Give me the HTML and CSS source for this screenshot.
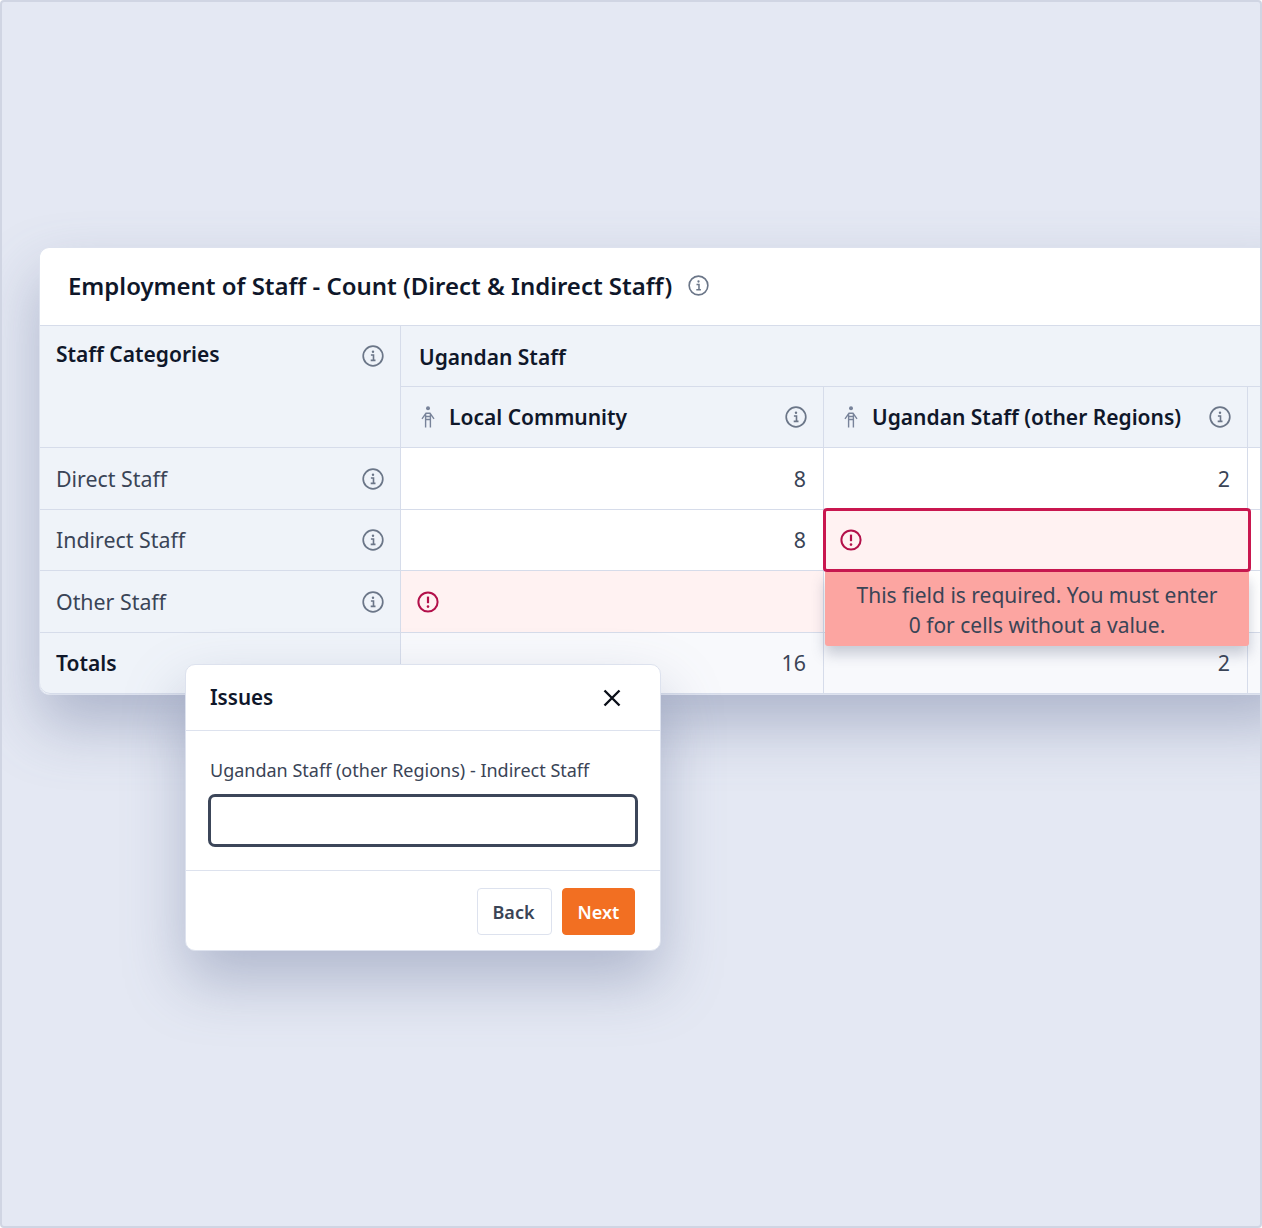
FILE: index.html
```html
<!DOCTYPE html>
<html lang="en">
<head>
    <meta charset="UTF-8">
    <title>Employment of Staff</title>
    <link rel="stylesheet" href="styles.css">
</head>
<body>
    <svg class="defs" width="0" height="0">
        <symbol id="info" viewBox="0 0 22 22">
            <circle cx="11" cy="11" r="9.8" fill="none" stroke="currentColor" stroke-width="1.7"/>
            <circle cx="11" cy="6.8" r="1.2" fill="currentColor"/>
            <path d="M8.9 10h2.6v5.2M8.7 15.4h4.8" fill="none" stroke="currentColor" stroke-width="1.6"/>
        </symbol>
        <symbol id="person" viewBox="0 0 14 22">
            <circle cx="7" cy="2.3" r="2" fill="currentColor"/>
            <path d="M1 12.8 5 7.2h4l4 5.6M4.6 7.2v14.3M9.4 7.2v14.3M4.6 10.5h4.8M4.6 13.5h4.8" fill="none" stroke="currentColor" stroke-width="1.4"/>
        </symbol>
        <symbol id="alert" viewBox="0 0 22 22">
            <circle cx="11" cy="11" r="9.6" fill="none" stroke="currentColor" stroke-width="2"/>
            <path d="M11 5.6v6.6" stroke="currentColor" stroke-width="2.2"/>
            <circle cx="11" cy="15.6" r="1.3" fill="currentColor"/>
        </symbol>
    </svg>

    <div class="frame">
        <div class="card">
            <div class="card-title">
                <h1>Employment of Staff - Count (Direct &amp; Indirect Staff)</h1>
                <svg class="icon-title"><use href="#info"/></svg>
            </div>

            <div class="grid">
                <div class="cell head cat-head">
                    <span>Staff Categories</span>
                    <svg class="icon-info"><use href="#info"/></svg>
                </div>
                <div class="cell head group-head">Ugandan Staff</div>

                <div class="cell head">
                    <svg class="icon-person"><use href="#person"/></svg>
                    <span class="grow">Local Community</span>
                    <svg class="icon-info"><use href="#info"/></svg>
                </div>
                <div class="cell head">
                    <svg class="icon-person"><use href="#person"/></svg>
                    <span class="grow">Ugandan Staff (other Regions)</span>
                    <svg class="icon-info"><use href="#info"/></svg>
                </div>
                <div class="cell head"></div>

                <div class="cell label">
                    <span>Direct Staff</span>
                    <svg class="icon-info"><use href="#info"/></svg>
                </div>
                <div class="cell num">8</div>
                <div class="cell num">2</div>
                <div class="cell"></div>

                <div class="cell label">
                    <span>Indirect Staff</span>
                    <svg class="icon-info"><use href="#info"/></svg>
                </div>
                <div class="cell num">8</div>
                <div class="cell active">
                    <div class="active-box">
                        <svg class="icon-alert"><use href="#alert"/></svg>
                    </div>
                    <div class="tip">This field is required. You must enter<br>0 for cells without a value.</div>
                </div>
                <div class="cell"></div>

                <div class="cell label">
                    <span>Other Staff</span>
                    <svg class="icon-info"><use href="#info"/></svg>
                </div>
                <div class="cell missing">
                    <svg class="icon-alert"><use href="#alert"/></svg>
                </div>
                <div class="cell"></div>
                <div class="cell"></div>

                <div class="cell label total-label">Totals</div>
                <div class="cell num total">16</div>
                <div class="cell num total">2</div>
                <div class="cell total"></div>
            </div>
        </div>

        <div class="modal">
            <div class="modal-head">
                <h2>Issues</h2>
                <svg class="icon-close" viewBox="0 0 18 18">
                    <path d="M1.5 1.5l15 15M16.5 1.5l-15 15" stroke="currentColor" stroke-width="2.4"/>
                </svg>
            </div>
            <div class="modal-body">
                <label for="issue">Ugandan Staff (other Regions) - Indirect Staff</label>
                <input id="issue" type="text">
            </div>
            <div class="modal-foot">
                <button class="btn btn-back">Back</button>
                <button class="btn btn-primary">Next</button>
            </div>
        </div>
    </div>
</body>
</html>
```

FILE: styles.css
```css
*{margin: 0;padding: 0;box-sizing: border-box;}
html, body{
    width: 100%;
    height: 100%;
}

body{
    font-family: "Noto Sans", "Open Sans", sans-serif;
    color: #3a4456;
}

.defs{
    position: absolute;
}

.frame{
    position: relative;
    height: 1228px;
    padding: 245px 0 0 37px;
    background: #e4e8f3;
    border: 2px solid #d0d5e3;
    border-radius: 4px;
    overflow: hidden;
}

.card{
    width: 1260px;
    background: #fff;
    border: 1px solid #dde2ee;
    border-right: 0;
    border-radius: 10px 0 0 10px;
    box-shadow: 0 30px 60px rgba(100, 112, 150, .42);
}

.card-title{
    display: flex;
    align-items: center;
    gap: 16px;
    height: 77px;
    padding: 0 0 2px 28px;
}

.card-title h1{
    font-size: 23.96px;
    font-weight: 600;
    color: #0f172a;
}

.icon-title{
    width: 21px;
    height: 21px;
    color: #6b7688;
}

.grid{
    display: grid;
    grid-template-columns: 360px 422px 423px 1fr;
    grid-template-rows: 59.5px;
    grid-auto-rows: 60.5px;
    gap: 1px;
    background: #d6dcea;
    padding-top: 1px;
    border-radius: 0 0 0 10px;
    border-bottom: 1px solid #d6dcea;
}

.cell{
    display: flex;
    align-items: center;
    position: relative;
    padding: 0 16px;
    background: #fff;
    font-size: 21.35px;
}

.head{
    background: #eff3f9;
    color: #0f172a;
    font-size: 21px;
    font-weight: 600;
}

.cat-head{
    grid-row: span 2;
    align-items: flex-start;
    justify-content: space-between;
    padding-top: 14px;
    font-size: 21px;
}

.cat-head .icon-info{
    margin-top: 5px;
}

.group-head{
    grid-column: span 3;
    padding: 2px 0 0 18px;
    font-size: 21px;
}

.grow{
    flex: 1;
    white-space: nowrap;
}

.label{
    justify-content: space-between;
    background: #eff3f9;
}

.label .icon-info{
    margin-top: 1px;
}

.num{
    justify-content: flex-end;
    padding-right: 17px;
}

.total{
    background: #f8f9fc;
}

.total-label{
    background: #eff3f9;
    color: #0f172a;
    font-size: 21px;
    font-weight: 600;
    border-radius: 0 0 0 10px;
}

.missing{
    background: #fff2f2;
    padding-top: 1px;
}

.active{
    z-index: 2;
}

.active-box{
    position: absolute;
    inset: -2px -4px -2px -1px;
    display: flex;
    align-items: center;
    padding-left: 14px;
    background: #fff2f2;
    border: 3px solid #c9174f;
    border-radius: 4px;
}

.tip{
    position: absolute;
    top: 62px;
    left: 1px;
    width: 424px;
    height: 74px;
    padding-top: 8px;
    background: #fca5a1;
    border-radius: 0 0 3px 3px;
    box-shadow: 0 8px 14px rgba(70, 80, 110, .28);
    text-align: center;
    font-size: 21px;
    line-height: 30px;
}

.icon-info{
    width: 22px;
    height: 22px;
    color: #6b7688;
    flex: none;
}

.icon-person{
    width: 14px;
    height: 22px;
    margin: 0 14px 0 4px;
    color: #78839a;
    flex: none;
}

.icon-alert{
    width: 22px;
    height: 22px;
    color: #b3104a;
}

.modal{
    position: absolute;
    left: 183px;
    top: 662px;
    width: 476px;
    height: 287px;
    background: #fff;
    border: 1px solid #dde2ee;
    border-radius: 10px;
    box-shadow: 0 30px 60px rgba(100, 112, 150, .4);
    z-index: 3;
}

.modal-head{
    display: flex;
    align-items: center;
    justify-content: space-between;
    height: 66px;
    padding: 0 39px 0 24px;
    border-bottom: 1px solid #dde2ee;
}

.modal-head h2{
    margin-bottom: 2px;
    font-size: 20.6px;
    font-weight: 600;
    color: #0f172a;
}

.icon-close{
    width: 18px;
    height: 18px;
    color: #0b0f19;
}

.modal-body{
    height: 140px;
    padding: 26px 22px 0;
    border-bottom: 1px solid #dde2ee;
}

.modal-body label{
    display: block;
    padding-left: 2px;
    margin-bottom: 10px;
    font-size: 18px;
    line-height: 27px;
}

.modal-body input{
    display: block;
    width: 430px;
    height: 53px;
    background: #fff;
    border: 3px solid #3c4659;
    border-radius: 7px;
    outline: 0;
}

.modal-foot{
    display: flex;
    justify-content: flex-end;
    gap: 10px;
    padding: 17px 25px 0 0;
}

.btn{
    height: 47px;
    background: #fff;
    border: 1px solid #dde2ee;
    border-radius: 4px;
    color: #3a4456;
    font-family: inherit;
    font-size: 18px;
    font-weight: 600;
}

.btn-back{
    width: 75px;
    padding-right: 2px;
}

.btn-primary{
    width: 73px;
    background: #f26f22;
    border-color: #f26f22;
    color: #fff;
}
```
